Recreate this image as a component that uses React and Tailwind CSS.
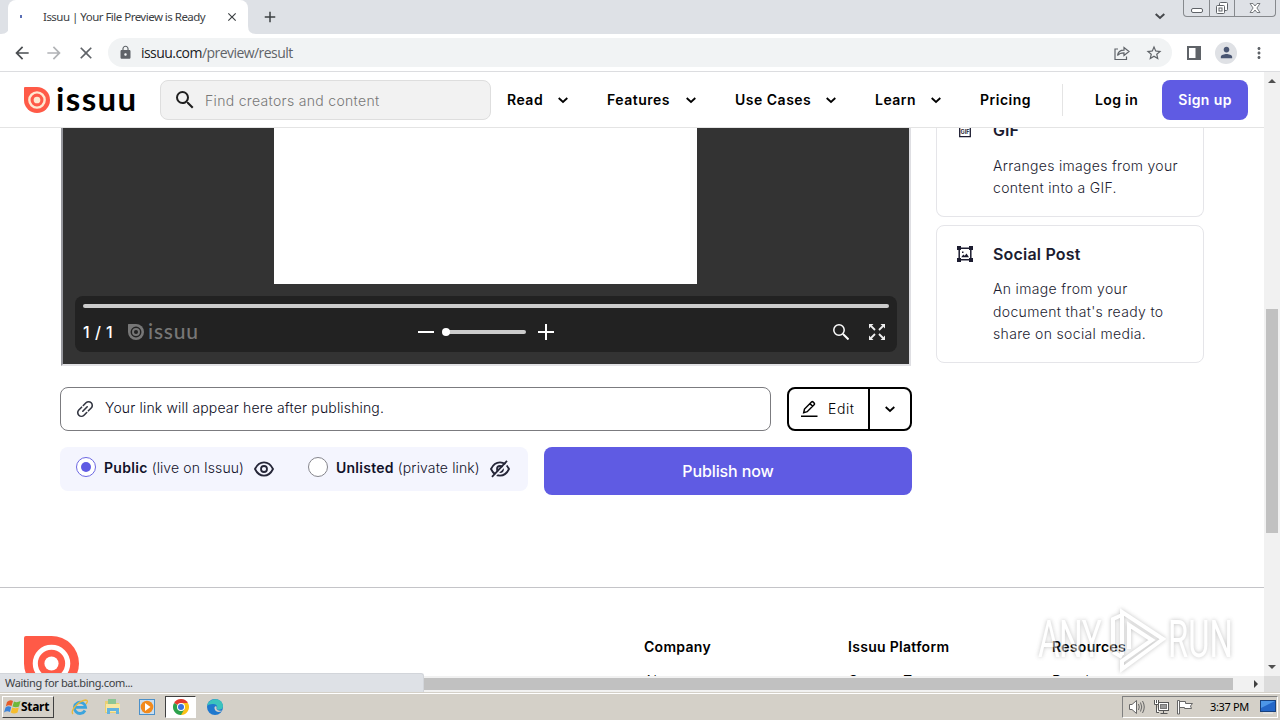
import React from "react";
import { MdArrowBack, MdArrowForward, MdClose, MdAdd, MdLock, MdStarBorder, MdMoreVert, MdPerson, MdSearch } from "react-icons/md";

function Chevron({ className = "", w = 2 }) {
  return (
    <svg className={className} width="12" height="12" viewBox="0 0 12 12" fill="none" stroke="currentColor" strokeWidth={w}>
      <path d="M1.7 4 L6 8 L10.3 4" />
    </svg>
  );
}

function Drop({ size, main, ring }) {
  return (
    <svg width={size} height={size} viewBox="0 0 56 56" className="block shrink-0">
      <path d="M2 0H28A28 28 0 1 1 0 28V2Q0 0 2 0Z" fill={main} />
      <circle cx="28" cy="28" r="16.5" fill="none" stroke={ring} strokeWidth="5.2" />
      <circle cx="28" cy="28" r="7.2" fill={ring} />
    </svg>
  );
}

function TabStrip() {
  return (
    <div className="flex h-[34px] shrink-0 bg-[#dee1e6] pl-[1px] font-['Noto_Sans']">
      <svg width="8" height="34" className="mr-[-1px] block"><path d="M8 26V34H0Q8 34 8 26Z" fill="#fff" /></svg>
      <div className="flex h-[34px] w-[240px] items-center rounded-t-[8px] bg-white pl-[12px]">
        <span className="mt-[-2px] h-[3px] w-[2px] bg-[#5a6fb5]" />
        <span className="ml-[21px] whitespace-nowrap text-[11.5px] leading-[34px] tracking-[-0.52px] text-[#3c4043]">Issuu | Your File Preview is Ready</span>
        <MdClose size={14} className="ml-auto mr-[9px] shrink-0 text-[#3c4043]" />
      </div>
      <svg width="8" height="34" className="block"><path d="M0 26V34H8Q0 34 0 26Z" fill="#fff" /></svg>
      <MdAdd size={18} className="ml-[5px] mt-[8px] text-[#3c4043]" />
      <Chevron className="ml-auto mr-[17px] mt-[10px] text-[#45484c]" />
      <div className="mr-[4px] flex h-[17px] w-[93px] rounded-b-[4px] border border-t-0 border-[#86898d] text-[#5f6368]">
        <div className="flex w-[26px] items-start justify-center border-r border-[#86898d] pt-[8px]">
          <div className="h-[5px] w-[12px] rounded-[2px] border border-[#5f6368] bg-white" />
        </div>
        <div className="flex w-[25px] justify-center border-r border-[#86898d]">
          <svg width="14" height="15" viewBox="0 0 14 15" fill="#fff" stroke="#5f6368">
            <rect x="4.5" y="2.5" width="8" height="8" rx="1" />
            <rect x="1.5" y="5.5" width="8" height="8" rx="1" />
            <rect x="4" y="8" width="3" height="3" />
          </svg>
        </div>
        <div className="flex flex-1 justify-center">
          <svg width="14" height="15" viewBox="0 0 14 15" fill="#fff" stroke="#6b6e73" strokeWidth="0.9">
            <path d="M2 3.5H5L7 6L9 3.5H12L8.9 8L12 12.5H9L7 10L5 12.5H2L5.1 8Z" />
          </svg>
        </div>
      </div>
    </div>
  );
}

function Toolbar() {
  return (
    <div className="flex h-[38px] shrink-0 items-center border-b border-[#dcdde0] bg-white pl-[12px] font-['Open_Sans'] text-[#5f6368]">
      <MdArrowBack size={20} className="text-[#4a4d51]" />
      <MdArrowForward size={20} className="ml-[12px] text-[#b1b3b6]" />
      <MdClose size={20} className="ml-[12px]" />
      <div className="ml-[12px] flex h-[29px] w-[1064px] items-center rounded-full bg-[#f1f3f4] pl-[10px] pr-[9px]">
        <MdLock size={15} className="mt-[-1px]" />
        <span className="ml-[8px] whitespace-nowrap text-[14px] tracking-[-0.55px]"><span className="text-[#202124]">issuu.com</span>/preview/result</span>
        <svg className="ml-auto" width="18" height="18" viewBox="0 0 18 18" fill="none" stroke="currentColor" strokeWidth="1.2">
          <path d="M5 5H2V15.5H13.5V12.5M4.5 11.5C5 8 7.5 6.2 11 6.2V3.5L16 7.5L11 11.5V8.8C8 8.8 6 9.5 4.5 11.5Z" />
        </svg>
        <MdStarBorder size={18} className="ml-[14px]" />
      </div>
      <svg className="ml-[15px]" width="14" height="14" viewBox="0 0 14 14"><path d="M0 0H14V14H0ZM2 2V12H8.5V2Z" fill="currentColor" fillRule="evenodd" /></svg>
      <div className="ml-[14px] flex h-[22px] w-[22px] items-center justify-center rounded-full bg-[#dfe1e5]"><MdPerson size={17} className="text-[#4a5672]" /></div>
      <MdMoreVert size={18} className="ml-[13px]" />
    </div>
  );
}

const NAV = [
  { label: "Read", box: "w-[100px]" },
  { label: "Features", box: "w-[128px]" },
  { label: "Use Cases", box: "w-[140px]" },
  { label: "Learn", box: "w-[105px]" },
];

function Header() {
  return (
    <header className="flex h-[56px] shrink-0 items-center border-b border-[#e4e4e4] bg-white pl-[24px] text-black">
      <Drop size={26} main="#ff5a47" ring="#ffe9d0" />
      <span className="ml-[6px] mt-[-4px] w-[98px] whitespace-nowrap font-['Lato'] text-[33px] font-bold leading-[40px] tracking-[1.4px]">issuu</span>
      <div className="ml-[6px] flex h-[40px] w-[331px] items-center rounded-[8px] border border-[#dedede] bg-[#f2f2f2] pl-[12px]">
        <MdSearch size={24} className="text-[#202020]" />
        <span className="ml-[8px] mt-[1px] text-[14px] font-light tracking-[0.32px] text-[#777]">Find creators and content</span>
      </div>
      <nav className="ml-[16px] flex items-center text-[14px] font-semibold tracking-[0.5px]">
        {NAV.map((n) => (
          <div key={n.label} className={`flex items-center ${n.box}`}>
            <span className="whitespace-nowrap">{n.label}</span>
            <Chevron className="ml-auto mr-[38px]" w={1.8} />
          </div>
        ))}
        <span>Pricing</span>
      </nav>
      <div className="ml-auto h-[32px] w-px bg-[#e4e4e4]" />
      <span className="ml-[32px] w-[67px] whitespace-nowrap text-[14px] font-semibold tracking-[0.35px]">Log in</span>
      <button className="mr-[16px] h-[40px] w-[86px] whitespace-nowrap rounded-[8px] bg-[#5f5be3] text-[14px] font-semibold tracking-[0.4px] text-white">Sign up</button>
    </header>
  );
}

function Viewer() {
  return (
    <div className="flex h-[238px] w-[850px] flex-col border-x-2 border-b-2 border-l-[#96979d] border-r-[#dedee2] border-b-[#e2e2e5] bg-[#333]">
      <div className="ml-[211.4px] h-[156px] w-[423px] bg-white" />
      <div className="ml-[12px] mt-[12px] h-[56px] w-[822px] rounded-[8px] bg-[#222] px-[8px] pt-[8px]">
        <div className="h-[4px] rounded-full bg-[#ccc]" />
        <div className="flex h-[32px] items-center pt-[16px] text-white">
          <span className="w-[45px] whitespace-nowrap text-[16px] font-medium leading-[16px] tracking-[0.5px]">1 / 1</span>
          <Drop size={16} main="#777" ring="#222" />
          <span className="ml-[4px] mt-[-2px] w-[270px] font-['Lato'] text-[21px] font-medium leading-[20px] tracking-[0.8px] text-[#777]">issuu</span>
          <div className="h-[2px] w-[16px] bg-white" />
          <div className="z-10 ml-[8px] h-[8px] w-[8px] rounded-full bg-white" />
          <div className="ml-[-4px] h-[4px] w-[80px] rounded-full bg-[#ccc]" />
          <svg className="ml-[12px]" width="16" height="16"><path d="M0 8H16M8 0V16" stroke="#fff" strokeWidth="2" /></svg>
          <svg className="ml-auto" width="16" height="16" viewBox="0 0 16 16" fill="none" stroke="#fff" strokeWidth="1.5"><circle cx="6" cy="6" r="5.2" /><path d="M10 10L15.5 15.5" strokeWidth="2" /></svg>
          <svg className="ml-[20px] mr-[4px]" width="16" height="16" viewBox="0 0 16 16" fill="#eee" stroke="#eee" strokeWidth="1.8">
            <path d="M2 2L6 6M14 2L10 6M2 14L6 10M14 14L10 10" />
            <path stroke="none" d="M0 0H4.5L0 4.5ZM16 0V4.5L11.5 0ZM0 16V11.5L4.5 16ZM16 16H11.5L16 11.5Z" />
          </svg>
        </div>
      </div>
    </div>
  );
}

function LinkRow() {
  return (
    <div className="mt-[21px] flex h-[44px] w-[852px] gap-[16px]">
      <div className="flex w-[711px] items-center rounded-[8px] border border-[#7b7b7f] pl-[15px]">
        <svg width="18" height="18" viewBox="0 0 18 18" fill="none" stroke="#333642" strokeWidth="1.6" strokeLinecap="round">
          <path d="M7.3 5.5L10 2.8A3.65 3.65 0 0 1 15.2 8L12.4 10.8M5.6 7.2L2.8 10A3.65 3.65 0 0 0 8 15.2L10.7 12.5M6.8 11.2L11.2 6.8" />
        </svg>
        <span className="ml-[11px] mt-[-3px] whitespace-nowrap text-[14px] font-light tracking-[0.16px] text-[#0b0b1c]">Your link will appear here after publishing.</span>
      </div>
      <div className="flex w-[125px] items-center rounded-[8px] border-2 border-black text-black">
        <div className="flex h-full w-[81px] items-center border-r-2 border-black pl-[12px]">
          <svg width="17" height="18" viewBox="0 0 17 18" fill="none" stroke="currentColor" strokeWidth="1.5">
            <path d="M0 16.2H16.5M2.7 12.7L3.5 9L10.7 1.8Q11.3 1.4 12 1.9L13.3 3.2Q13.8 3.9 13.3 4.5L6.2 11.7ZM9 3.6L11.6 6.2" />
          </svg>
          <span className="ml-[10px] mt-[-2px] text-[14px] font-light tracking-[0.6px]">Edit</span>
        </div>
        <Chevron className="ml-[14px]" w={1.8} />
      </div>
    </div>
  );
}

function Eye({ off }) {
  return (
    <svg width="20" height="18" viewBox="0 0 20 18" fill="none" stroke="#252638" strokeWidth="1.8">
      <path d="M1 9C3 4.8 6.2 2.4 10 2.4S17 4.8 19 9C17 13.2 13.8 15.6 10 15.6S3 13.2 1 9Z" />
      <circle cx="10" cy="9" r="3" />
      {off && <path d="M3.2 17.6L18.2 2.6" stroke="#f4f5fe" />}
      {off && <path d="M2 16.8L17 0.8" />}
    </svg>
  );
}

function PublishRow() {
  return (
    <div className="mt-[16px] flex w-[852px] items-start gap-[16px]">
      <div className="flex h-[44px] w-[468px] items-center rounded-[8px] bg-[#f4f5fe] pb-[3px] pl-[16px] text-[14px] font-light text-[#12122a]">
        <span className="mt-[-1px] flex h-[20px] w-[20px] items-center justify-center rounded-full border border-[#6c67e2] bg-white"><span className="h-[10px] w-[10px] rounded-full bg-[#5f5be3]" /></span>
        <span className="ml-[8px] w-[150px] whitespace-nowrap tracking-[0.1px]"><b className="font-semibold tracking-[0.3px]">Public</b> (live on Issuu)</span>
        <span className="mt-[3px]"><Eye /></span>
        <span className="ml-[34px] mt-[-1px] h-[20px] w-[20px] rounded-full border border-[#85858c] bg-white" />
        <span className="ml-[8px] w-[154px] whitespace-nowrap tracking-[0.13px]"><b className="font-semibold tracking-[0.25px]">Unlisted</b> (private link)</span>
        <span className="mt-[3px]"><Eye off /></span>
      </div>
      <button className="h-[48px] w-[368px] rounded-[8px] bg-[#5f5be3] text-[16px] font-medium tracking-[-0.1px] text-white">Publish now</button>
    </div>
  );
}

function SideCards() {
  return (
    <div className="ml-[24px] flex w-[268px] flex-col gap-[8px] text-[#1c1c30]">
      <div className="h-[89px] overflow-hidden rounded-b-[8px] border border-t-0 border-[#e5e5e9] pl-[20px]">
        <div className="mt-[-10px] flex h-[24px] items-center">
          <svg width="16" height="18" viewBox="0 0 16 18" fill="none" stroke="currentColor" strokeWidth="1.3">
            <path d="M2.7 0V15.7H13.3V0" />
            <text x="8" y="13" textAnchor="middle" fontSize="5.5" fontWeight="700" fill="currentColor" stroke="none" fontFamily="Inter, sans-serif">GIF</text>
          </svg>
          <span className="ml-[20px] text-[16px] font-semibold">GIF</span>
        </div>
        <p className="ml-[36px] mt-[13px] whitespace-nowrap text-[14px] font-light leading-[22.4px] tracking-[0.3px]">Arranges images from your<br />content into a GIF.</p>
      </div>
      <div className="h-[138px] rounded-[8px] border border-[#e5e5e9] pl-[20px] pt-[16px]">
        <div className="flex h-[24px] items-center">
          <svg width="16" height="16" viewBox="0 0 16 16" fill="none" stroke="currentColor" strokeWidth="1.5">
            <path d="M2.2 2.2H13.8V13.8H2.2Z" />
            <path stroke="none" fill="currentColor" d="M0 0H4V4H0ZM12 0H16V4H12ZM0 12H4V16H0ZM12 12H16V16H12ZM4.2 11.3L6.3 8.5L7.7 9.7L9.5 7.5L12 11.3ZM5 5.5H6.5V7H5Z" />
          </svg>
          <span className="ml-[20px] text-[16px] font-semibold tracking-[0.2px]">Social Post</span>
        </div>
        <p className="ml-[36px] mt-[12.4px] whitespace-nowrap text-[14px] font-light leading-[22.4px] tracking-[0.34px]">An image from your<br />document that's ready to<br />share on social media.</p>
      </div>
    </div>
  );
}

const COLS = [["Company", "About"], ["Issuu Platform", "Content Types"], ["Resources", "Developers"]];

function Footer() {
  return (
    <footer className="mt-[92px] flex border-t border-[#c4c4c8] pl-[24px] pt-[48px] text-black">
      <div className="w-[620px]"><Drop size={55} main="#ff5a47" ring="#fff" /></div>
      {COLS.map(([a, b]) => (
        <div key={a} className="w-[204px] shrink-0 text-[14px] leading-[22px]">
          <div className="whitespace-nowrap font-semibold tracking-[0.3px]">{a}</div>
          <div className="mt-[12px] font-light">{b}</div>
        </div>
      ))}
    </footer>
  );
}

function Watermark() {
  return (
    <div className="absolute left-[1038px] top-[606px] flex h-[68px] w-[196px] items-center font-['Roboto'] text-[52px] leading-[52px] text-white opacity-45 drop-shadow-[0_0_2px_#777]">
      <span className="w-[72px] origin-left scale-x-[0.64] tracking-[-1px]">ANY</span>
      <svg width="56" height="66" viewBox="0 0 56 66" fill="none" stroke="#fff" strokeWidth="4" className="shrink-0">
        <path d="M12 48V5L53 32L12 62V54L42 33L19 18V42M3 45V12L12 8M3 45L12 50" />
      </svg>
      <span className="ml-[2px] w-[64px] origin-left scale-x-[0.63]">RUN</span>
    </div>
  );
}

function WinFlag({ className }) {
  return (
    <svg className={className} width="18" height="16" viewBox="0 0 18 16">
      <path d="M3 3Q6 0 9 2L7.5 7Q4.5 5.5 1.8 7.5Z" fill="#e65b28" />
      <path d="M10 2.5Q13 4 16.5 2L15 7.5Q12 9 8.5 7.5Z" fill="#6fb83a" />
      <path d="M1.5 8.5Q4 6.5 7.2 8L6 13Q3 11.5 0 13.5Z" fill="#3c83d8" />
      <path d="M8.2 8.5Q11.5 10 14.8 8.5L13.5 13.5Q10 15.5 6.8 13.5Z" fill="#f6bd2d" />
    </svg>
  );
}

function Taskbar() {
  return (
    <div className="flex h-[28px] shrink-0 items-center border-t border-[#d4d0c8] bg-[#d4d0c8] shadow-[inset_0_1px_0_#fff]">
      <div className="ml-[2px] mt-[1px] flex h-[22px] w-[52px] items-center border border-b-[#404040] border-l-white border-r-[#404040] border-t-white pl-[1px]">
        <WinFlag className="shrink-0" />
        <span className="ml-[-1px] font-['Noto_Sans'] text-[12px] font-bold tracking-[-0.3px] text-black">Start</span>
      </div>
      <svg className="ml-[17px]" width="18" height="18" viewBox="0 0 18 18" fill="none">
        <path d="M14 12.5A5.6 5.6 0 1 1 14.6 9.3H4.5" stroke="#3ca4dd" strokeWidth="2.8" />
        <path d="M2 16C-1 13 7 3 14.5 2Q18 2 15 6" stroke="#e9b93b" strokeWidth="1.3" />
      </svg>
      <svg className="ml-[15px]" width="18" height="18" viewBox="0 0 18 18">
        <path d="M1 3H7L8 5H15V15H1Z" fill="#e9cf74" /><path d="M4 1H12V6H4Z" fill="#8dc693" /><path d="M2 6H16V14H2Z" fill="#f8e7a2" /><path d="M3 16V10H15V16H12V13H6V16Z" fill="#64b3df" />
      </svg>
      <svg className="ml-[17px]" width="16" height="16" viewBox="0 0 16 16">
        <rect x="0.5" y="0.5" width="15" height="15" fill="#c9def0" stroke="#4b90c9" /><circle cx="8" cy="8" r="6.3" fill="#f28a1c" /><path d="M6 4L11.5 8L6 12Z" fill="#fff" />
      </svg>
      <div className="ml-[10px] mt-[1px] flex h-[22px] w-[31px] items-center justify-center border border-b-white border-l-[#404040] border-r-white border-t-[#404040] bg-white">
        <svg width="16" height="16" viewBox="0 0 16 16">
          <path d="M8 8L1.07 4A8 8 0 0 1 14.93 4Z" fill="#e33b2e" />
          <path d="M8 8L14.93 4A8 8 0 0 1 8 16Z" fill="#fbc116" />
          <path d="M8 8V16A8 8 0 0 1 1.07 4Z" fill="#2da24c" />
          <path d="M8 4H14.93L11.5 10Z" fill="#fbc116" /><path d="M4.5 10L8 16L11.5 10Z" fill="#2da24c" />
          <circle cx="8" cy="8" r="4" fill="#fff" /><circle cx="8" cy="8" r="3" fill="#3a72de" />
        </svg>
      </div>
      <svg className="ml-[11px]" width="16" height="16" viewBox="0 0 16 16">
        <circle cx="8" cy="8" r="8" fill="#1f78ce" /><path d="M0.3 6.5C1.5-1 15-2.5 16 7C16 11 11 11.5 9.5 10C11.5 7 9 5 6.5 5Q2 4.8 0.3 6.5Z" fill="#3bc3bd" /><path d="M7.5 8Q7 12 11 13Q14 13 15 11.5Q11 12.5 9.5 10Q10 7.5 9 7Z" fill="#d4d0c8" />
      </svg>
      <div className="ml-auto mr-[2px] mt-[1px] flex h-[22px] w-[156px] items-center border border-b-white border-l-[#808080] border-r-white border-t-[#808080] pl-[6px]">
        <svg width="17" height="16" viewBox="0 0 17 16" fill="#fff" stroke="#666">
          <path d="M0.5 5.5H3L7.5 1.5V14.5L3 10.5H0.5Z" /><path fill="none" d="M9.5 5Q11 8 9.5 11M11.5 3.5Q14 8 11.5 12.5M13.5 2Q17 8 13.5 14" />
        </svg>
        <svg className="ml-[7px]" width="17" height="16" viewBox="0 0 17 16" fill="#fff" stroke="#555">
          <rect x="5.5" y="3.5" width="10" height="8" /><rect x="7.5" y="5.5" width="6" height="4" fill="#999" stroke="#777" /><path d="M1.5 1V5.5H5.5V1M3.5 1V4M3.5 6V13.5H6M7.5 14.5H14.5M10.5 12V14" />
        </svg>
        <svg className="ml-[7px]" width="17" height="16" viewBox="0 0 17 16" fill="#fff" stroke="#666"><path d="M0.5 1.5H2.5V15H0.5ZM2.5 2.5H8.5V4.5H15.5L13.5 7L14.5 9.5H7.5V8.5H2.5Z" /></svg>
        <span className="ml-[16px] w-[42px] whitespace-nowrap font-['Noto_Sans'] text-[11px] tracking-[-0.35px] text-black">3:37 PM</span>
        <svg className="ml-[8px] shrink-0" width="16" height="14" viewBox="0 0 16 14"><rect x="0.5" y="0.5" width="15" height="11" fill="#2467c8" stroke="#18417d" /><path d="M1 1H15L1 8Z" fill="#4d97e8" /><path d="M3 13H13" stroke="#e8edf4" /></svg>
      </div>
    </div>
  );
}

export default function App() {
  return (
    <div className="relative flex h-[720px] w-[1280px] flex-col overflow-hidden bg-white font-['Inter',sans-serif]">
      <TabStrip />
      <Toolbar />
      <div className="flex h-[604px] shrink-0">
        <div className="flex w-[1264px] flex-col overflow-hidden">
          <Header />
          <main className="h-[548px] overflow-hidden">
            <div className="flex pl-[60px]">
              <div className="w-[852px]">
                <div className="pl-[1px]"><Viewer /></div>
                <LinkRow />
                <PublishRow />
              </div>
              <SideCards />
            </div>
            <Footer />
          </main>
        </div>
        <div className="flex w-[16px] flex-col items-center bg-[#f1f1f1]">
          <svg width="8" height="4" className="mt-[7px]"><path d="M0 4L4 0L8 4Z" fill="#505050" /></svg>
          <div className="mt-[226px] h-[224px] w-[12px] bg-[#c1c1c1]" />
          <svg width="8" height="4" className="mb-[7px] mt-auto"><path d="M0 0L4 4L8 0Z" fill="#505050" /></svg>
        </div>
      </div>
      <div className="flex h-[16px] shrink-0 items-center bg-[#f1f1f1] pl-[424px]">
        <div className="h-[12px] w-[809px] bg-[#c1c1c1]" />
        <svg width="4" height="8" className="ml-[21px]"><path d="M0 0L4 4L0 8Z" fill="#404040" /></svg>
        <div className="ml-auto h-full w-[16px] bg-[#dcdcdc]" />
      </div>
      <Taskbar />
      <Watermark />
      <div className="absolute left-0 top-[673px] h-[19px] w-[424px] rounded-tr-[3px] border-r border-t border-[#d2d5da] bg-[#dee1e6] pl-[5px] font-['Noto_Sans'] text-[11px] leading-[18px] tracking-[-0.35px] text-[#3c4043]">Waiting for bat.bing.com...</div>
    </div>
  );
}
